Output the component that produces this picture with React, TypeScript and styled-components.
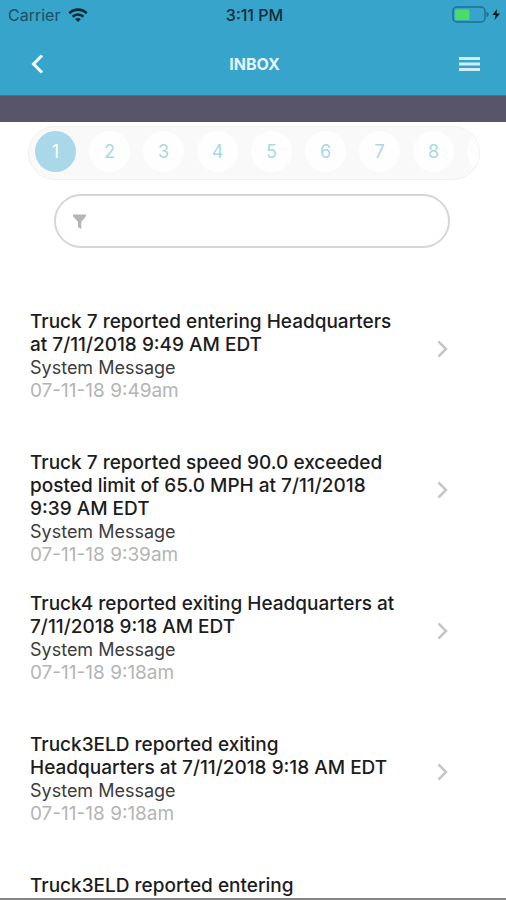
import React from "react";
import styled, { createGlobalStyle } from "styled-components";

const GlobalStyle = createGlobalStyle`
  *, *::before, *::after { box-sizing: border-box; }
  body {
    margin: 0;
    background: #fff;
    color: #1c1c1e;
    font-family: Inter, Roboto, "Liberation Sans", sans-serif;
  }
  button, input { font: inherit; color: inherit; }
  button { padding: 0; border: 0; background: none; cursor: pointer; }
`;

const Screen = styled.div`
  display: flex;
  flex-direction: column;
  height: 100vh;
  overflow: hidden;
  border-bottom: 2px solid #858585;
`;

const Header = styled.header`
  flex: none;
  background: #37a4cb;
`;

const StatusBar = styled.div`
  display: grid;
  grid-template-columns: 1fr auto 1fr;
  align-items: center;
  height: 29px;
  padding: 0 5px 0 8px;
  font-size: 16px;
  line-height: 20px;
`;

const Carrier = styled.span`
  display: flex;
  align-items: center;
  gap: 8px;
  color: #1b4f64;
`;

const Clock = styled.time`
  color: #0d2c38;
  font-weight: 500;
`;

const Battery = styled.span`
  display: flex;
  justify-content: flex-end;
`;

const NavBar = styled.nav`
  display: grid;
  grid-template-columns: 1fr auto 1fr;
  align-items: center;
  height: 66px;
  padding: 4px 25px 0 28px;
`;

const Title = styled.h1`
  margin: 0;
  color: #e4f4fa;
  font-size: 16px;
  font-weight: 700;
  line-height: 24px;
`;

const NavButton = styled.button<{ $end?: boolean }>`
  display: flex;
  justify-self: ${(p) => (p.$end ? "end" : "start")};
`;

const Strip = styled.div`
  flex: none;
  height: 27px;
  background: #58556b;
  border-top: 1px solid #4a6f8a;
`;

const Pager = styled.div`
  flex: none;
  display: flex;
  gap: 13px;
  margin: 4px 26px 0 28px;
  height: 54px;
  padding: 4px 6px;
  overflow: hidden;
  border: 1px solid #f1f1f1;
  border-radius: 27px;
  background: #f9f9f9;
`;

const PageButton = styled.button<{ $active?: boolean }>`
  flex: none;
  width: 41px;
  height: 41px;
  border-radius: 50%;
  background: ${(p) => (p.$active ? "#a9d8e8" : "#fefefe")};
  color: ${(p) => (p.$active ? "#fff" : "#a9d8e5")};
  font-size: 18px;
  line-height: 41px;
`;

const Filter = styled.label`
  flex: none;
  display: flex;
  align-items: center;
  gap: 12px;
  height: 54px;
  margin: 14px 56px 0 54px;
  padding: 0 16px;
  border: 2px solid #d6d6d6;
  border-radius: 27px;
`;

const FilterInput = styled.input`
  flex: 1;
  min-width: 0;
  border: 0;
  outline: 0;
  background: none;
  font-size: 18px;
`;

const List = styled.ul`
  flex: 1;
  min-height: 0;
  margin: 0;
  padding: 62px 57px 0 30px;
  overflow: hidden;
  list-style: none;
`;

const Message = styled.li`
  display: flex;
  align-items: flex-start;
  justify-content: space-between;
  height: 141px;
`;

const MessageBody = styled.div`
  width: 370px;
  min-width: 0;
  font-size: 19px;
  line-height: 23px;
`;

const Subject = styled.h2`
  margin: 0;
  font-size: inherit;
  font-weight: 500;
`;

const Sender = styled.p`
  margin: 0;
  color: #3c3c3e;
  font-size: 18px;
`;

const Stamp = styled.p`
  margin: 0;
  color: #b4b4b4;
`;

const OpenButton = styled.button`
  display: flex;
  flex: none;
  margin-top: 30px;
`;

const pages = [1, 2, 3, 4, 5, 6, 7, 8, 9];

const messages = [
  { subject: "Truck 7 reported entering Headquarters at 7/11/2018 9:49 AM EDT", stamp: "07-11-18 9:49am" },
  { subject: "Truck 7 reported speed 90.0 exceeded posted limit of 65.0 MPH at 7/11/2018 9:39 AM EDT", stamp: "07-11-18 9:39am" },
  { subject: "Truck4 reported exiting Headquarters at 7/11/2018 9:18 AM EDT", stamp: "07-11-18 9:18am" },
  { subject: "Truck3ELD reported exiting Headquarters at 7/11/2018 9:18 AM EDT", stamp: "07-11-18 9:18am" },
  { subject: "Truck3ELD reported entering Headquarters at 7/11/2018 9:18 AM EDT", stamp: "07-11-18 9:18am" },
];

const WifiIcon = () => (
  <svg width="20" height="14" viewBox="0 0 20 14" fill="none" stroke="#0b2a36" strokeWidth="2.6" aria-hidden="true">
    <path d="M1.300 5.200C6.200 .4 13.800 .4 18.700 5.200" />
    <path d="M4.600 8.700c3-2.900 7.800-2.900 10.800 0" />
    <path d="M7.200 11.200c1.500-1.500 4.100-1.500 5.600 0L10 14z" fill="#0b2a36" stroke="none" />
  </svg>
);

const BatteryIcon = () => (
  <svg width="50" height="17" viewBox="0 0 50 17" aria-hidden="true">
    <rect x="2" y="1" width="32" height="15" rx="4" fill="none" stroke="#20708f" strokeWidth="1.5" />
    <path d="M35.500 6c3 .5 3 4.500 0 5z" fill="#20708f" />
    <rect x="4" y="3.500" width="14.500" height="10.500" rx="1.500" fill="#4cdb66" />
    <path d="M46 3l-4.500 6h3.200L43.500 14l5.500-6.500h-3.500z" fill="#08141a" />
  </svg>
);

const BackIcon = () => (
  <svg width="18" height="22" viewBox="0 0 18 22" fill="none" stroke="#fff" strokeWidth="3" aria-hidden="true">
    <path d="M14 2.500L5.500 11l8.500 8.500" />
  </svg>
);

const MenuIcon = () => (
  <svg width="23" height="16" viewBox="0 0 23 16" fill="#d3edf6" aria-hidden="true">
    <path d="M1 1h21v3H1zM1 6.500h21v3H1zM1 12h21v3H1z" />
  </svg>
);

const FunnelIcon = () => (
  <svg width="15" height="17" viewBox="0 0 15 17" fill="#b5b5b5" aria-hidden="true">
    <path d="M1 1.500h13v1.700L9.300 9v7L6 14V9L1 3.200z" />
  </svg>
);

const ChevronIcon = () => (
  <svg width="13" height="18" viewBox="0 0 13 18" fill="none" stroke="#c6c6ca" strokeWidth="2.500" aria-hidden="true">
    <path d="M2.500 1.500L10 9l-7.500 7.500" />
  </svg>
);

export default function App() {
  return (
    <>
      <GlobalStyle />
      <Screen>
        <Header>
          <StatusBar>
            <Carrier>
              Carrier
              <WifiIcon />
            </Carrier>
            <Clock>3:11 PM</Clock>
            <Battery>
              <BatteryIcon />
            </Battery>
          </StatusBar>
          <NavBar>
            <NavButton aria-label="Back">
              <BackIcon />
            </NavButton>
            <Title>INBOX</Title>
            <NavButton $end aria-label="Menu">
              <MenuIcon />
            </NavButton>
          </NavBar>
        </Header>
        <Strip />
        <Pager role="group" aria-label="Pages">
          {pages.map((page) => (
            <PageButton key={page} $active={page === 1}>
              {page}
            </PageButton>
          ))}
        </Pager>
        <Filter>
          <FunnelIcon />
          <FilterInput type="text" aria-label="Filter messages" />
        </Filter>
        <List>
          {messages.map((message) => (
            <Message key={message.subject}>
              <MessageBody>
                <Subject>{message.subject}</Subject>
                <Sender>System Message</Sender>
                <Stamp>{message.stamp}</Stamp>
              </MessageBody>
              <OpenButton aria-label="Open message">
                <ChevronIcon />
              </OpenButton>
            </Message>
          ))}
        </List>
      </Screen>
    </>
  );
}
